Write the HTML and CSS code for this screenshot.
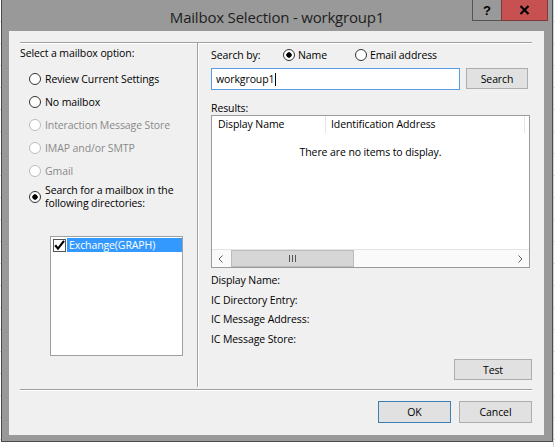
FILE: index.html
```html
<!DOCTYPE html>
<html lang="en">
<head>
  <meta charset="UTF-8" />
  <title>Mailbox Selection - workgroup1</title>
  <link rel="stylesheet" href="styles.css">
</head>
<body>

<div class="desktop">
  <div class="window">
    <div class="titlebar">
      <div class="title">Mailbox Selection - workgroup1</div>
      <div class="caption-buttons">
        <span class="cap help">?</span>
        <span class="cap close">
          <svg width="11" height="10" viewBox="0 0 11 10"><path d="M1.5 1 L9.5 9 M9.5 1 L1.5 9" stroke="#000" stroke-width="2.2" fill="none"/></svg>
        </span>
      </div>
    </div>

    <div class="client">
      <div class="main">
        <div class="options">
          <div class="group-label">Select a mailbox option:</div>
          <div class="radio-list">
            <div class="radio"><span class="circle"></span>Review Current Settings</div>
            <div class="radio"><span class="circle"></span>No mailbox</div>
            <div class="radio disabled"><span class="circle"></span>Interaction Message Store</div>
            <div class="radio disabled"><span class="circle"></span>IMAP and/or SMTP</div>
            <div class="radio disabled"><span class="circle"></span>Gmail</div>
            <div class="radio multi checked"><span class="circle"></span><span>Search for a mailbox in the<br>following directories:</span></div>
          </div>
          <div class="dirlist">
            <div class="dir-item">
              <svg class="check" width="13" height="13" viewBox="0 0 13 13">
                <rect x="0.5" y="0.5" width="12" height="12" fill="#fff" stroke="#555"/>
                <path d="M2.2 6.2 L5 9.6 L11 1.8" stroke="#000" stroke-width="2.2" fill="none"/>
              </svg>
              <span class="dir-name">Exchange(GRAPH)</span>
            </div>
          </div>
        </div>

        <div class="search">
          <div class="searchby">
            <span class="searchby-label">Search by:</span>
            <span class="opt opt-name"><span class="circle checked"></span>Name</span>
            <span class="opt"><span class="circle"></span>Email address</span>
          </div>
          <div class="search-row">
            <div class="textbox">workgroup1<span class="caret"></span></div>
            <div class="btn btn-search">Search</div>
          </div>
          <div class="results-label">Results:</div>
          <div class="listview">
            <div class="lv-header">
              <div class="lv-col col-name">Display Name</div>
              <div class="lv-col col-addr">Identification Address</div>
              <div class="lv-col col-rest"></div>
            </div>
            <div class="lv-body">
              <div class="lv-empty">There are no items to display.</div>
            </div>
            <div class="hscroll">
              <div class="sb-arrow">
                <svg width="5" height="8" viewBox="0 0 5 8"><path d="M4.5 0.5 L1 4 L4.5 7.5" stroke="#606060" stroke-width="1" fill="none"/></svg>
              </div>
              <div class="sb-thumb">
                <svg width="7" height="7" viewBox="0 0 7 7"><path d="M0.5 0 V7 M3.5 0 V7 M6.5 0 V7" stroke="#555" stroke-width="1"/></svg>
              </div>
              <div class="sb-track"></div>
              <div class="sb-arrow">
                <svg width="5" height="8" viewBox="0 0 5 8"><path d="M0.5 0.5 L4 4 L0.5 7.5" stroke="#606060" stroke-width="1" fill="none"/></svg>
              </div>
            </div>
          </div>
          <div class="details">
            <div class="detail">Display Name:</div>
            <div class="detail">IC Directory Entry:</div>
            <div class="detail">IC Message Address:</div>
            <div class="detail">IC Message Store:</div>
          </div>
          <div class="btn btn-test">Test</div>
        </div>
      </div>

      <div class="footer">
        <div class="btn btn-default">OK</div>
        <div class="btn">Cancel</div>
      </div>
    </div>
  </div>
</div>

</body>
</html>
```

FILE: styles.css
```css
body {
  margin: 0;
  background: #fff;
  font-family: "Open Sans", "Noto Sans", sans-serif;
  font-size: 10.5px;
  letter-spacing: -0.1px;
  color: #000;
}
.desktop {
  width: 555px;
  height: 447px;
  padding-left: 1px;
  box-sizing: border-box;
  overflow: hidden;
  background-image:
    linear-gradient(#d4d4d4, #d4d4d4),
    repeating-linear-gradient(to bottom, transparent 0 21px, #dcdcdc 21px 22px);
  background-size: 1px 100%, 100% 100%;
  background-position: 553px 0, 0 0;
  background-repeat: no-repeat;
}
.window {
  width: 552px;
  height: 442px;
  box-sizing: border-box;
  background: #999;
  border: 1px solid #4a4a4a;
  border-top: none;
  display: flex;
  flex-direction: column;
}
.titlebar {
  height: 31px;
  display: grid;
}
.title, .caption-buttons {
  grid-area: 1 / 1;
}
.title {
  justify-self: center;
  align-self: center;
  padding-top: 3px;
  font-size: 15px;
  color: #1e1e1e;
  letter-spacing: -0.2px;
}
.caption-buttons {
  justify-self: end;
  align-self: start;
  display: flex;
  margin-right: 4px;
}
.cap {
  height: 20px;
  display: flex;
  align-items: center;
  justify-content: center;
  border: 1px solid #555;
  border-top: none;
}
.help {
  width: 28px;
  border-right: none;
  font-weight: bold;
  font-size: 13px;
  font-family: "Liberation Sans", sans-serif;
}
.close {
  width: 45px;
  background: #c75050;
  border-color: #7a3a3a;
}

.client {
  flex: 1;
  margin: 0 8px 6px 7px;
  background: #f0f0f0;
  padding: 11px 12px 0 11px;
}
.main {
  height: 348px;
  box-sizing: border-box;
  display: grid;
  grid-template-columns: 178px 1fr;
  border-top: 1px solid #a0a0a0;
  border-bottom: 1px solid #a0a0a0;
  box-shadow: inset 0 1px 0 #fff, 0 1px 0 #fff;
}

/* left side */
.options {
  padding-top: 3px;
  margin-bottom: 2px;
  border-right: 1px solid #a0a0a0;
  box-shadow: 1px 0 0 #fff;
}
.group-label {
  line-height: 14px;
}
.radio-list {
  margin-top: 7px;
}
.radio {
  display: flex;
  align-items: center;
  height: 23px;
  padding-left: 9px;
}
.circle {
  width: 12px;
  height: 12px;
  box-sizing: border-box;
  border: 1px solid #333;
  border-radius: 50%;
  background: #fff;
  margin-right: 4px;
  flex: none;
}
.checked > .circle, .circle.checked {
  background: radial-gradient(circle, #000 0 2.4px, #fff 3px);
}
.radio.disabled {
  color: #8a8a8a;
}
.radio.disabled .circle {
  border-color: #bcbcbc;
}
.radio.multi {
  height: auto;
  margin-top: 2px;
  line-height: 13px;
}
.dirlist {
  margin: 26px 0 0 30px;
  width: 133px;
  height: 120px;
  box-sizing: border-box;
  border: 1px solid #a0a0a0;
  background: #fff;
  padding: 1px 0 0 2px;
}
.dir-item {
  display: flex;
  align-items: center;
  height: 14px;
}
.check {
  margin-right: 1px;
  flex: none;
}
.dir-name {
  flex: 1;
  background: #3399ff;
  color: #fff;
  line-height: 14px;
  padding-left: 2px;
}

/* right side */
.search {
  padding: 4px 0 0 13px;
  display: flex;
  flex-direction: column;
}
.searchby {
  display: flex;
  align-items: center;
  height: 16px;
}
.searchby-label {
  width: 72px;
}
.opt {
  display: flex;
  align-items: center;
}
.opt .circle {
  margin-right: 3px;
}
.opt-name {
  width: 72px;
}
.search-row {
  display: flex;
  gap: 6px;
  margin-top: 5px;
  align-items: flex-start;
}
.textbox {
  width: 249px;
  height: 22px;
  box-sizing: border-box;
  border: 1px solid #569de5;
  background: #fff;
  padding-left: 4px;
  display: flex;
  align-items: center;
}
.caret {
  width: 1px;
  height: 13px;
  background: #000;
  margin-left: 1px;
}
.btn {
  height: 21px;
  box-sizing: border-box;
  border: 1px solid #adadad;
  background: #e1e1e1;
  display: flex;
  align-items: center;
  justify-content: center;
}
.btn-search {
  width: 62px;
}
.results-label {
  margin-top: 11px;
  line-height: 14px;
}
.listview {
  width: 319px;
  height: 153px;
  box-sizing: border-box;
  border: 1px solid #9b9b9b;
  background: #fff;
  display: flex;
  flex-direction: column;
}
.lv-header {
  display: flex;
  height: 17px;
}
.lv-col {
  line-height: 17px;
  border-right: 1px solid #e5e5e5;
}
.col-name {
  width: 107px;
  padding-left: 6px;
}
.col-addr {
  width: 193px;
  padding-left: 5px;
}
.col-rest {
  flex: 1;
  border-right: none;
}
.lv-body {
  flex: 1;
}
.lv-empty {
  margin-top: 12px;
  text-align: center;
  line-height: 14px;
}
.hscroll {
  height: 18px;
  display: flex;
  background: #fafafa;
  border-top: 1px solid #e4e4e4;
  box-sizing: border-box;
}
.sb-arrow {
  width: 17px;
  display: flex;
  align-items: center;
  justify-content: center;
}
.sb-thumb {
  width: 123px;
  margin-left: 2px;
  box-sizing: border-box;
  background: #d6d6d6;
  border: 1px solid #bcbcbc;
  display: flex;
  align-items: center;
  justify-content: center;
}
.sb-track {
  flex: 1;
}
.details {
  margin-top: 3px;
}
.detail {
  height: 19.5px;
  line-height: 19.5px;
}
.btn-test {
  width: 78px;
  align-self: flex-end;
  margin-top: 10px;
}

.footer {
  display: flex;
  justify-content: flex-end;
  gap: 8px;
  margin-top: 11px;
}
.footer .btn {
  width: 73px;
  height: 22px;
}
.btn-default {
  border-color: #3c7fb1;
}
```
